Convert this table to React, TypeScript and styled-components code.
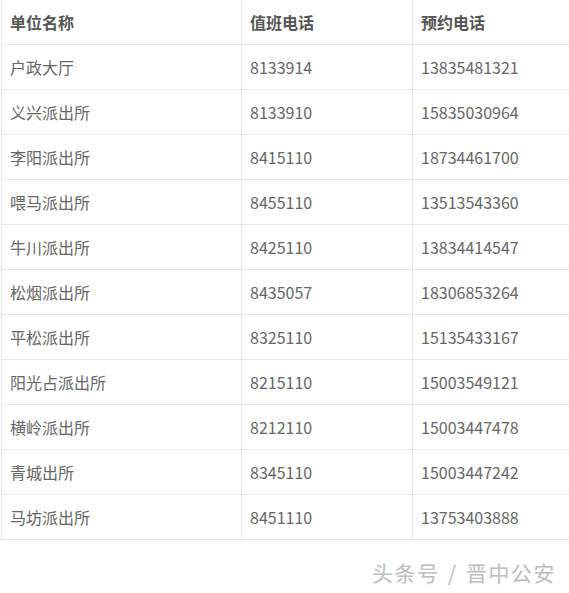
import React from "react";
import styled, { createGlobalStyle } from "styled-components";

const Global = createGlobalStyle`
  html, body { margin: 0; padding: 0; background: #fff; }
  body { font-family: "Noto Sans CJK SC", "Noto Sans", sans-serif; }
`;

const Page = styled.div`
  width: 569px;
  height: 593px;
  overflow: hidden;
  padding-left: 1px;
  box-sizing: border-box;
`;

const Table = styled.div`
  display: grid;
  grid-template-columns: 240px 171px 170px;
  border-left: 1px solid #e6e6e6;
  width: 582px;
`;

const Cell = styled.div<{ $head?: boolean }>`
  height: 44px;
  box-sizing: content-box;
  border-bottom: 1px solid #e6e6e6;
  border-right: 1px solid #e6e6e6;
  padding-left: 8px;
  display: flex;
  align-items: center;
  font-size: 16px;
  line-height: 1;
  color: ${(p) => (p.$head ? "#555" : "#666")};
  font-weight: ${(p) => (p.$head ? 700 : 400)};
  white-space: nowrap;
`;

const Footer = styled.div`
  display: flex;
  justify-content: flex-end;
  padding: 17px 13px 0 0;
`;

const Mark = styled.span`
  font-size: 21px;
  color: #bdbdbd;
  letter-spacing: 1.5px;
  word-spacing: 2px;
  text-shadow: 1px 1px 0 #fff, -1px -1px 0 #fff, 1px -1px 0 #fff, -1px 1px 0 #eee;
`;

const rows: [string, string, string][] = [
  ["户政大厅", "8133914", "13835481321"],
  ["义兴派出所", "8133910", "15835030964"],
  ["李阳派出所", "8415110", "18734461700"],
  ["喂马派出所", "8455110", "13513543360"],
  ["牛川派出所", "8425110", "13834414547"],
  ["松烟派出所", "8435057", "18306853264"],
  ["平松派出所", "8325110", "15135433167"],
  ["阳光占派出所", "8215110", "15003549121"],
  ["横岭派出所", "8212110", "15003447478"],
  ["青城出所", "8345110", "15003447242"],
  ["马坊派出所", "8451110", "13753403888"],
];

export default function App() {
  return (
    <Page>
      <Global />
      <Table>
        <Cell $head>单位名称</Cell>
        <Cell $head>值班电话</Cell>
        <Cell $head>预约电话</Cell>
        {rows.map((r) =>
          r.map((c, i) => <Cell key={r[0] + i}>{c}</Cell>)
        )}
      </Table>
      <Footer>
        <Mark>头条号 / 晋中公安</Mark>
      </Footer>
    </Page>
  );
}
